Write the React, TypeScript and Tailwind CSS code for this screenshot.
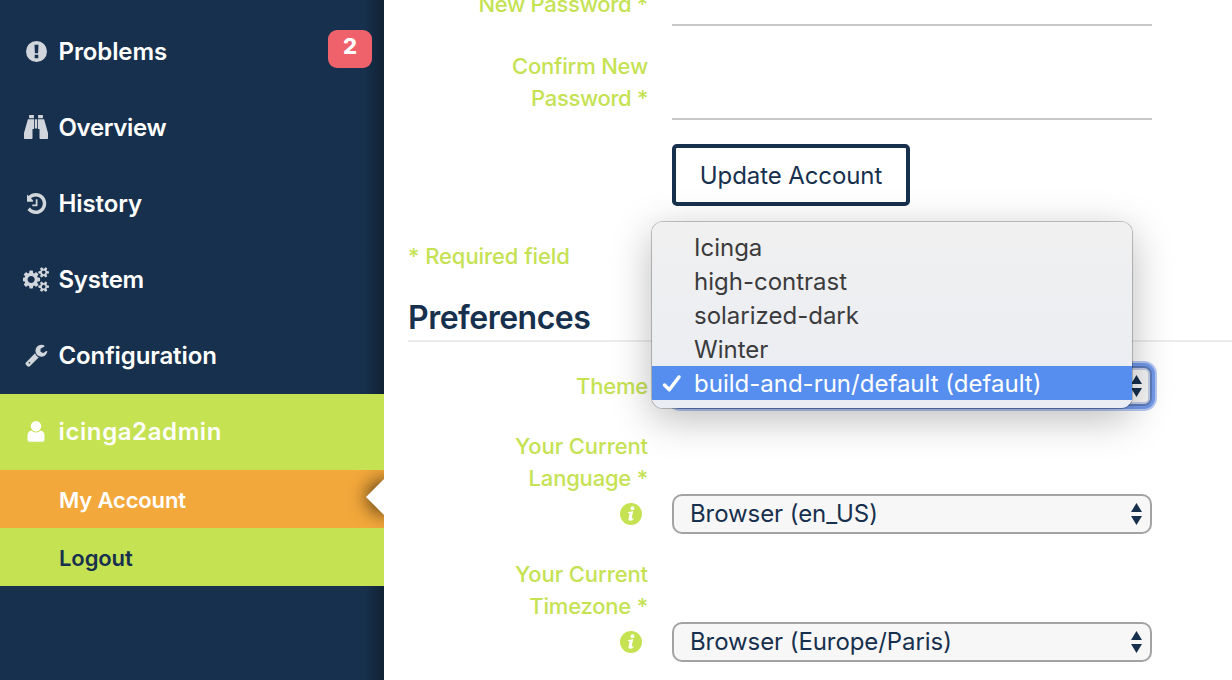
import type { ReactNode } from 'react';

const HISTORY =
  'M1536 896q0 156-61 298t-164 245-245 164-298 61q-172 0-327-72.5t-264-204.5q-7-10-6.5-22.5t8.5-20.5l137-138q10-9 25-9 16 2 23 12 73 95 179 147t225 52q104 0 198.5-40.5t163.5-109.5 109.5-163.5 40.5-198.5-40.5-198.5-109.5-163.5-163.5-109.5-198.5-40.5q-98 0-188 35.5t-160 101.5l137 138q31 30 14 69-17 40-59 40h-448q-26 0-45-19t-19-45v-448q0-42 40-59 39-17 69 14l130 129q107-101 244.5-156.5t284.5-55.5q156 0 298 61t245 164 164 245 61 298zm-640-288v448q0 14-9 23t-23 9h-320q-14 0-23-9t-9-23v-64q0-14 9-23t23-9h224v-352q0-14 9-23t23-9h64q14 0 23 9t9 23z';
const WRENCH =
  'M448 1472q0-26-19-45t-45-19-45 19-19 45 19 45 45 19 45-19 19-45zm644-420l-682 682q-37 37-90 37-52 0-91-37l-106-108q-38-36-38-90 0-53 38-91l681-681q39 98 114.5 173.5t173.5 114.5zm634-435q0 39-23 106-47 134-164.5 217.5t-258.5 83.5q-185 0-316.5-131.5t-131.5-316.5 131.5-316.5 316.5-131.5q58 0 121.5 16.5t107.5 46.5q16 11 16 28t-16 28l-293 169v224l193 107q5-3 79-48.5t135.5-81 70.5-35.5q15 0 23.5 10t8.5 25z';
const COGS =
  'M832 896q0-106-75-181t-181-75-181 75-75 181 75 181 181 75 181-75 75-181zm768 512q0-52-38-90t-90-38-90 38-38 90q0 53 37.5 90.5t90.5 37.5 90.5-37.5 37.5-90.5zm0-1024q0-52-38-90t-90-38-90 38-38 90q0 53 37.5 90.5t90.5 37.5 90.5-37.5 37.5-90.5zm-384 421v185q0 10-7 19.5t-16 10.5l-155 24q-11 35-32 76 34 48 90 115 7 11 7 20 0 12-7 19-23 30-82.5 89.5t-78.5 59.5q-11 0-21-7l-115-90q-37 19-77 31-11 108-23 155-7 24-30 24h-186q-11 0-20-7.5t-10-17.5l-23-153q-34-10-75-31l-118 89q-7 7-20 7-11 0-21-8-144-133-144-160 0-9 7-19 10-14 41-53t47-61q-23-44-35-82l-152-24q-10-1-17-9.5t-7-19.5v-185q0-10 7-19.5t16-10.5l155-24q11-35 32-76-34-48-90-115-7-11-7-20 0-12 7-20 22-30 82-89t79-59q11 0 21 7l115 90q34-18 77-32 11-108 23-154 7-24 30-24h186q11 0 20 7.5t10 17.5l23 153q34 10 75 31l118-89q8-7 20-7 11 0 21 8 144 133 144 160 0 8-7 19-12 16-42 54t-45 60q23 48 34 82l152 23q10 2 17 10.5t7 19.5zm640 533v140q0 16-149 31-12 27-30 52 51 113 51 138 0 4-4 7-122 71-124 71-8 0-46-47t-52-68q-20 2-30 2t-30-2q-14 21-52 68t-46 47q-2 0-124-71-4-3-4-7 0-25 51-138-18-25-30-52-149-15-149-31v-140q0-16 149-31 13-29 30-52-51-113-51-138 0-4 4-7 4-2 35-20t59-34 30-16q8 0 46 46.5t52 67.5q20-2 30-2t30 2q51-71 92-112l6-2q4 0 124 70 4 3 4 7 0 25-51 138 17 23 30 52 149 15 149 31zm0-1024v140q0 16-149 31-12 27-30 52 51 113 51 138 0 4-4 7-122 71-124 71-8 0-46-47t-52-68q-20 2-30 2t-30-2q-14 21-52 68t-46 47q-2 0-124-71-4-3-4-7 0-25 51-138-18-25-30-52-149-15-149-31v-140q0-16 149-31 13-29 30-52-51-113-51-138 0-4 4-7 4-2 35-20t59-34 30-16q8 0 46 46.5t52 67.5q20-2 30-2t30 2q51-71 92-112l6-2q4 0 124 70 4 3 4 7 0 25-51 138 17 23 30 52 149 15 149 31z';

const ProblemsIcon = () => (
  <svg viewBox="0 0 21 21" className="h-[21px] w-[21px]" fill="currentColor">
    <path
      fillRule="evenodd"
      d="M10.5 0a10.5 10.5 0 1 0 0 21a10.5 10.5 0 1 0 0-21zM8.500 3.700h4l-.4 8.500H8.900zM8.700 13.800h3.600v3.400H8.700z"
    />
  </svg>
);

const BinocularsIcon = () => (
  <svg viewBox="0 0 24 24" className="h-6 w-6" fill="currentColor">
    <path d="M5.100 0h4.800v3.300H5.100zM14.100 0h4.800v3.300h-4.800zM3.900 4.200H10V14H8.500v9.200q0 .8-.8.8H.8Q0 24 0 23.200V18zM20.100 4.200H14V14h1.500v9.200q0 .8.8.8h6.900q.8 0 .8-.8V18zM10.800 4.200h2.400V13.500h-2.400z" />
  </svg>
);

const UserIcon = () => (
  <svg viewBox="0 0 18 21" className="h-[21px] w-[18px]" fill="currentColor">
    <circle cx="9" cy="5.300" r="5.200" />
    <path d="M4.300 9.500Q6.300 11.600 9 11.600t4.700-2.100Q17.500 10.300 17.500 15v3.200q0 2.600-2.600 2.600H3.100Q.5 20.800.5 18.200V15Q.5 10.300 4.300 9.500z" />
  </svg>
);

const navItems: { label: string; icon: ReactNode; tracking: string; badge?: string }[] = [
  { label: 'Problems', icon: <ProblemsIcon />, tracking: 'tracking-[-0.1px]', badge: '2' },
  { label: 'Overview', icon: <BinocularsIcon />, tracking: 'tracking-[-0.35px]' },
  {
    label: 'History',
    icon: (
      <svg viewBox="128 128 1536 1536" className="h-[21px] w-[21px] translate-x-px" fill="currentColor">
        <path d={HISTORY} />
      </svg>
    ),
    tracking: 'tracking-[-0.1px]',
  },
  {
    label: 'System',
    icon: (
      <svg viewBox="0 0 1920 1792" className="h-[25px] w-[27px]" fill="currentColor">
        <path d={COGS} />
      </svg>
    ),
    tracking: 'tracking-[-0.25px]',
  },
  {
    label: 'Configuration',
    icon: (
      <svg viewBox="64 64 1700 1728" className="h-[23px] w-[23px]" fill="currentColor">
        <path d={WRENCH} />
      </svg>
    ),
    tracking: 'tracking-[-0.1px]',
  },
];

const InfoIcon = () => (
  <svg viewBox="0 0 22 22" className="mr-1.5 h-[22px] w-[22px]">
    <circle cx="11" cy="11" r="11" fill="#c5e253" />
    <circle cx="12.500" cy="5.200" r="1.900" fill="#fff" />
    <path d="M7.800 8.900q2.800-.2 5.400-1L11.800 14.900q-.2 1 .4.900.6-.1 1.300-.9l.6.500q-1.500 2.400-3.800 2.400-2.200 0-1.700-2.200L9.600 10.300 7.800 10z" fill="#fff" />
  </svg>
);

const Arrows = () => (
  <svg viewBox="0 0 11 22" className="h-[22px] w-[11px] shrink-0" fill="#17304d">
    <path d="M0 9 5.500 0 11 9zM0 13h11l-5.500 9z" />
  </svg>
);

function SelectRow({ first, second, value }: { first: string; second: string; value: string }) {
  return (
    <div className="mb-6 flex h-[104px] items-end gap-6">
      <div className="flex h-full w-60 flex-col items-end text-right font-medium text-[#c5e253]">
        <div className="tracking-[-0.1px]">{first}</div>
        <div className="tracking-[-0.2px]">{second}</div>
        <div className="flex h-[38px] items-center pt-px">
          <InfoIcon />
        </div>
      </div>
      <div className="flex h-10 w-[480px] items-center justify-between rounded-[10px] border-2 border-[#a3a3a3] bg-[#f7f7f7] pl-4 pr-2 text-[24px] text-[#17304d]">
        <span className="tracking-[-0.08px]">{value}</span>
        <Arrows />
      </div>
    </div>
  );
}

const themes = ['Icinga', 'high-contrast', 'solarized-dark', 'Winter'];

export default function App() {
  return (
    <div className="relative flex h-[680px] w-[1232px] overflow-hidden bg-white font-['Inter',sans-serif] text-[22px] leading-8">
      <aside className="w-96 shrink-0 bg-[#17304d] bg-[linear-gradient(to_left,#102335_0,#17304d_20px)] pt-[14px]">
        {navItems.map((item) => (
          <div key={item.label} className="flex h-[76px] items-center text-[24px] font-semibold text-white">
            <span className="mb-0.5 ml-[22px] flex w-7 justify-center text-[#d1d6dc]">{item.icon}</span>
            <span className={`ml-[8.500px] ${item.tracking}`}>{item.label}</span>
            {item.badge && (
              <span className="mb-1.5 ml-auto mr-3 flex h-[38px] w-11 items-center justify-center rounded-[9px] bg-[#ef626b] pb-1.5 text-[22px] font-extrabold">
                {item.badge}
              </span>
            )}
          </div>
        ))}
        <div className="flex h-[76px] items-center bg-[#c5e253] text-[24px] font-semibold text-white">
          <span className="mb-0.5 ml-[22px] flex w-7 justify-center">
            <UserIcon />
          </span>
          <span className="ml-[8.500px] tracking-[0.6px]">icinga2admin</span>
        </div>
        <div className="relative flex h-[58px] items-center overflow-hidden bg-[#f3a83b] pl-[59px] pt-0.5 font-semibold text-white">
          <span className="tracking-[-0.15px]">My Account</span>
          <span className="absolute -right-[18px] top-[9px] h-9 w-9">
            <span className="block h-9 w-9 scale-[0.707] rotate-45 bg-white shadow-[0_0_28px_rgba(0,0,0,0.9)]" />
          </span>
        </div>
        <div className="flex h-[58px] items-center bg-[#c5e253] pl-[59px] pt-0.5 font-semibold text-[#17304d]">
          <span className="tracking-[-0.1px]">Logout</span>
        </div>
      </aside>

      <main className="flex-1 pl-6">
        <div className="flex h-[26px] items-end gap-6">
          <div className="flex h-[26px] w-60 items-end justify-end pb-[6px] font-medium tracking-[-0.3px] text-[#c5e253]">
            New Password *
          </div>
          <div className="w-[480px] border-b-2 border-[#c9c9c9]" />
        </div>
        <div className="mt-6 flex h-[70px] items-end gap-6">
          <div className="h-full w-60 text-right font-medium text-[#c5e253]">
            <div className="tracking-[-0.2px]">Confirm New</div>
            <div className="tracking-[-0.35px]">Password *</div>
          </div>
          <div className="w-[480px] border-b-2 border-[#c9c9c9]" />
        </div>
        <button className="ml-[264px] mt-6 flex h-[62px] w-[238px] items-center justify-center rounded-[5px] border-4 border-[#17304d] pt-0.5 text-[24px] tracking-[-0.1px] text-[#17304d]">
          Update Account
        </button>
        <div className="mt-[34px] font-medium tracking-[-0.08px] text-[#c5e253]">* Required field</div>
        <h2 className="flex h-[70px] items-center border-b-2 border-[#ececec] pt-[23px] text-[32px] font-semibold tracking-[-0.5px] text-[#17304d]">
          Preferences
        </h2>
        <div className="mb-6 mt-6 flex h-10 items-center gap-6">
          <div className="w-60 text-right font-medium tracking-[-0.2px] text-[#c5e253]">Theme</div>
          <div className="flex h-10 w-[480px] items-center justify-end rounded-[8px] border-2 border-[#5d7dbb] bg-[#f7f7f7] pr-2 shadow-[inset_0_0_0_2px_#c2cde5,0_0_0_3px_#7399ea,0_0_0_5px_#b6c9f2]">
            <Arrows />
          </div>
        </div>
        <SelectRow first="Your Current" second="Language *" value="Browser (en_US)" />
        <SelectRow first="Your Current" second="Timezone *" value="Browser (Europe/Paris)" />
      </main>

      <ul className="absolute left-[652px] top-[222px] h-[186px] w-[480px] rounded-[11px] bg-linear-to-b from-[#f0f0f0] to-[#eaedf3] py-2 text-[24px] leading-[34px] text-[#3b3b3d] shadow-[0_0_0_1px_rgba(0,0,0,0.22),0_10px_40px_rgba(0,0,0,0.28)]">
        {themes.map((theme) => (
          <li key={theme} className="h-[34px] pl-[42px] pt-px">
            {theme}
          </li>
        ))}
        <li className="flex h-[34px] items-center bg-[#568eef] text-white">
          <svg viewBox="0 0 20 20" className="ml-[10px] h-5 w-5" fill="none" stroke="currentColor" strokeWidth="3.5" strokeLinecap="round" strokeLinejoin="round">
            <path d="M2.500 12 7.300 16.700 17 4" />
          </svg>
          <span className="ml-3 pt-0.5">build-and-run/default (default)</span>
        </li>
      </ul>
    </div>
  );
}
